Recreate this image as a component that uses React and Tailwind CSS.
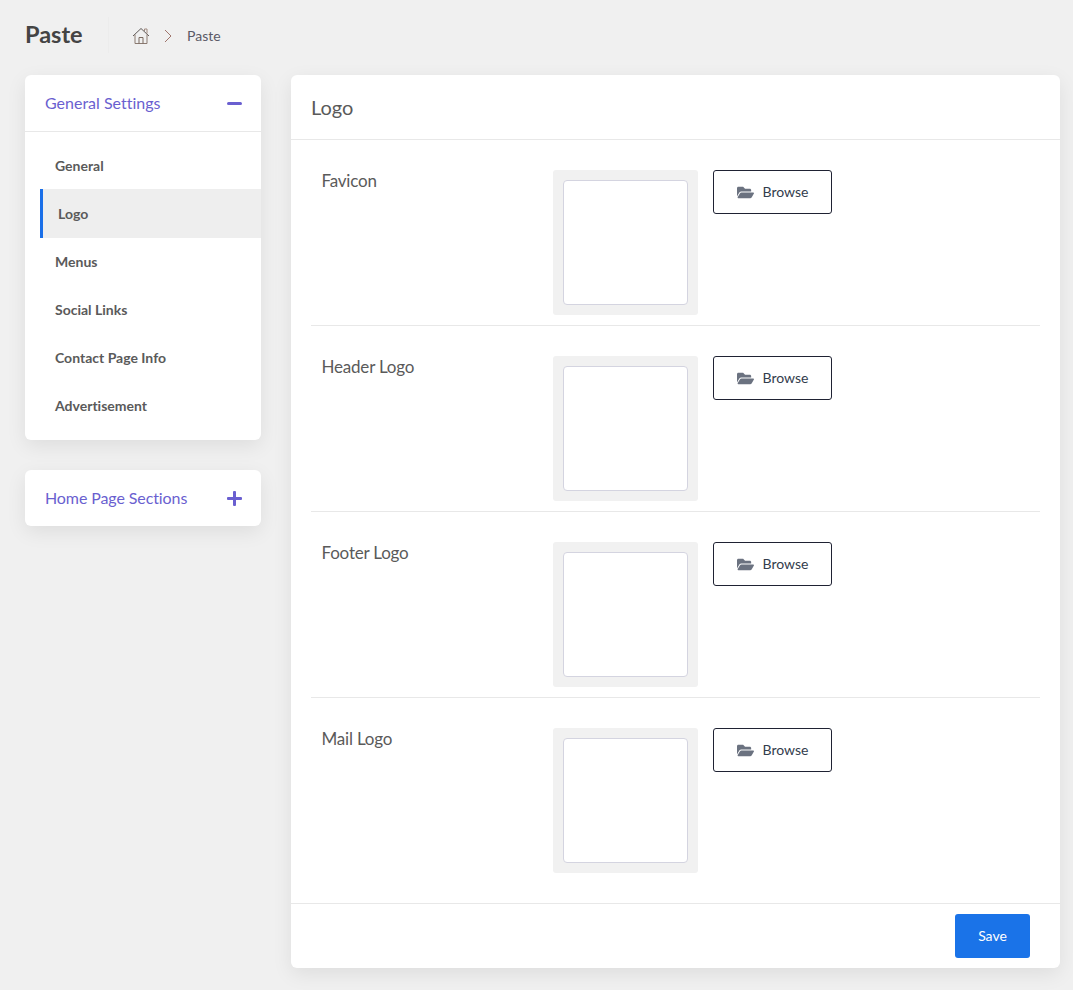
import { FaFolderOpen } from "react-icons/fa";

const menu = ["General", "Logo", "Menus", "Social Links", "Contact Page Info", "Advertisement"];
const logos = ["Favicon", "Header Logo", "Footer Logo", "Mail Logo"];

const HomeIcon = () => (
  <svg width="18" height="18" viewBox="0 0 18 18" fill="none" stroke="#5f5a58" strokeWidth="1">
    <path d="M1 9 L9 1.5 L17 9" />
    <path d="M12.5 4 V2 H15 V6.5" stroke="#a08a80" />
    <path d="M3 7.5 V16.5 H15 V7.5" stroke="#8a7a70" />
    <path d="M7 16.5 V10.5 H11 V16.5" stroke="#7a6a60" />
  </svg>
);

const ChevronIcon = () => (
  <svg width="8" height="14" viewBox="0 0 8 14" fill="none" stroke="#a0756c" strokeWidth="1">
    <path d="M1 1 L7 7 L1 13" />
  </svg>
);

const MinusIcon = () => <div className="h-[3px] w-[15px] rounded-full bg-[#6a5fd0]" />;

const PlusIcon = () => (
  <svg width="15" height="15" viewBox="0 0 15 15" fill="#6a5fd0">
    <rect x="6" y="0" width="3" height="15" rx="1" />
    <rect x="0" y="6" width="15" height="3" rx="1" />
  </svg>
);

const LogoRow = ({ label, last }) => (
  <div className={`flex pt-[30px] ${last ? "pb-[30px]" : "border-b border-[#e8e8e8] pb-[10px]"}`}>
    <div className="w-[242px] pl-[10.5px] text-[17px] leading-[22px] tracking-[-0.2px] text-[#5a5a5a]">{label}</div>
    <div className="h-[145px] w-[145px] rounded-[3px] bg-[#f1f1f1] p-[10px]">
      <div className="h-[125px] w-[125px] rounded-[4px] border border-[#d4d4e0] bg-white" />
    </div>
    <button className="ml-[15px] flex h-[44px] w-[119px] items-center justify-center gap-[9px] rounded-[3px] border border-[#1f2233] bg-white text-sm text-[#333d4d]">
      <FaFolderOpen className="text-[17px] text-[#6b7280]" />
      Browse
    </button>
  </div>
);

const App = () => {
  return (
    <div className="min-h-[990px] bg-[#f0f0f0] pl-[25px] pr-[13px] font-['Lato',sans-serif] [font-variant-ligatures:none]">
      <div className="mb-[5px] flex h-[70px] items-center">
        <h1 className="w-[83px] text-[23.5px] font-bold text-[#444]">Paste</h1>
        <div className="h-[36px] w-px bg-[#ececec]" />
        <div className="ml-[23px] mt-[2px] flex items-center">
          <HomeIcon />
          <div className="ml-[14px] mr-[15px] flex items-center"><ChevronIcon /></div>
          <span className="text-sm text-[#5a5a66]">Paste</span>
        </div>
      </div>

      <div className="flex items-start gap-[30px]">
        <div className="flex w-[236px] flex-col gap-[30px]">
          <div className="rounded-md bg-white shadow-[0_6px_20px_rgba(0,0,0,0.08)]">
            <div className="flex h-[57px] items-center justify-between border-b border-[#e8e8e8] pl-[20px] pr-[19px] text-base text-[#6a5fd0]">
              General Settings
              <MinusIcon />
            </div>
            <div className="pb-[10px] pl-[15px] pt-[10px]">
              {menu.map((item) =>
                item === "Logo" ? (
                  <div key={item} className="-mt-px flex h-[49px] items-center border-l-[3px] border-[#1a6fe8] bg-[#eeeeee] pl-[15px] text-sm font-bold text-[#5a5a5a]">
                    {item}
                  </div>
                ) : (
                  <div key={item} className="flex h-[48px] items-center pl-[15px] text-sm font-bold text-[#5a5a5a]">
                    {item}
                  </div>
                )
              )}
            </div>
          </div>

          <div className="flex h-[56px] items-center justify-between rounded-md bg-white pl-[20px] pr-[19px] text-base tracking-[-0.1px] text-[#6a5fd0] shadow-[0_6px_20px_rgba(0,0,0,0.08)]">
            Home Page Sections
            <PlusIcon />
          </div>
        </div>

        <div className="w-[769px] rounded-md bg-white shadow-[0_6px_20px_rgba(0,0,0,0.08)]">
          <div className="flex h-[65px] items-center border-b border-[#e8e8e8] px-[20px] text-xl text-[#5a5a5a]">Logo</div>
          <div className="px-[20px]">
            {logos.map((label, i) => (
              <LogoRow key={label} label={label} last={i === logos.length - 1} />
            ))}
          </div>
          <div className="flex justify-end border-t border-[#e8e8e8] px-[30px] py-[10px]">
            <button className="h-[44px] w-[75px] rounded-[3px] bg-[#1a73e8] text-sm text-white">Save</button>
          </div>
        </div>
      </div>
    </div>
  );
};

export default App;
